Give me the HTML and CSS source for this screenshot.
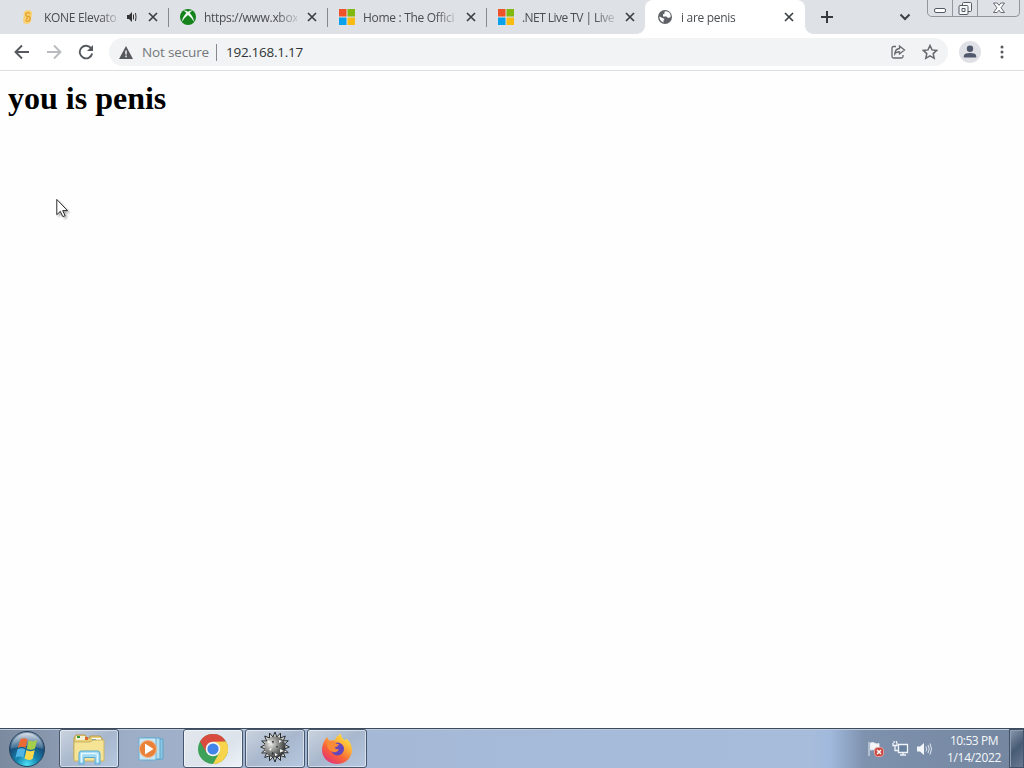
FILE: index.html
```html
<!DOCTYPE html>
<html lang="en">
<head>
    <meta charset="utf-8">
    <title>i are penis</title>
    <link rel="stylesheet" href="styles.css">
</head>
<body>
    <div class="tab-strip">
        <div class="tab first">
            <svg class="favicon" viewBox="0 0 16 16"><path d="M4 3q1-2 5-2 4 1 3 5 0 2-1 2 1 1 0 4-1 3-4 3-4 0-4-3z" fill="#f8d277"/><path d="M10 5Q8.500 3 6.500 4 5 6 7 7.500H9.500Q11 10 9 12 6.500 13 5.500 11M6 9.500h2" fill="none" stroke="#e5a12c" stroke-width="1.300"/></svg>
            <span class="tab-title short">KONE Elevato</span>
            <svg class="audio" viewBox="0 0 12 12"><path d="M1 4h2l3-3v10L3 8H1z" fill="#333"/><path d="M7.500 3.500v5M9.500 2q1 4 0 8" fill="none" stroke="#333"/></svg>
            <svg class="close" viewBox="0 0 10 10"><path d="M1 1l8 8M9 1l-8 8"/></svg>
        </div>
        <div class="tab">
            <svg class="favicon" viewBox="0 0 16 16"><circle cx="8" cy="8" r="8" fill="#14831b"/><path d="M3.400 1.500Q5.500 1 8 2.800 10.500 1 12.600 1.500 10.500 2.500 9.600 4.100 13.500 8 14.200 13Q12 9 8 6 4 9 1.800 13 2.500 8 6.400 4.100 5.500 2.500 3.400 1.500z" fill="#f2f7f3"/></svg>
            <span class="tab-title">https://www.xbox</span>
            <svg class="close" viewBox="0 0 10 10"><path d="M1 1l8 8M9 1l-8 8"/></svg>
        </div>
        <div class="tab">
            <svg class="favicon" viewBox="0 0 16 16"><path d="M0 0h7.500v7.500H0z" fill="#ef5128"/><path d="M8.500 0H16v7.500H8.500z" fill="#80b810"/><path d="M0 8.500h7.500V16H0z" fill="#08a1ec"/><path d="M8.500 8.500H16V16H8.500z" fill="#f9ba12"/></svg>
            <span class="tab-title">Home : The Offici</span>
            <svg class="close" viewBox="0 0 10 10"><path d="M1 1l8 8M9 1l-8 8"/></svg>
        </div>
        <div class="tab">
            <svg class="favicon" viewBox="0 0 16 16"><path d="M0 0h7.500v7.500H0z" fill="#ef5128"/><path d="M8.500 0H16v7.500H8.500z" fill="#80b810"/><path d="M0 8.500h7.500V16H0z" fill="#08a1ec"/><path d="M8.500 8.500H16V16H8.500z" fill="#f9ba12"/></svg>
            <span class="tab-title net">.NET Live TV | Live</span>
            <svg class="close" viewBox="0 0 10 10"><path d="M1 1l8 8M9 1l-8 8"/></svg>
        </div>
        <div class="tab active">
            <svg class="favicon" viewBox="0 0 16 16"><circle cx="8" cy="8" r="7" fill="#5f6368"/><path d="M8 2.200q-1 1-.2 2L6 5.500v2h3.500L11 9l2.500-.8Q14.200 4 10.800 2.800 9.500 2 8 2.200zM2.300 7.600L5.500 9l2 1-1 1.500v2Q2.500 12 2.300 7.600z" fill="#fff"/></svg>
            <span class="tab-title">i are penis</span>
            <svg class="close" viewBox="0 0 10 10"><path d="M1 1l8 8M9 1l-8 8"/></svg>
        </div>
        <svg class="new-tab" viewBox="0 0 14 14"><path d="M7 1v12M1 7h12"/></svg>
        <svg class="tab-search" viewBox="0 0 12 8"><path d="M1.500 1.500L6 6l4.500-4.500"/></svg>
        <div class="caption">
            <div class="cap-btn min"><svg width="14" height="6" viewBox="0 0 14 6"><rect x="1.500" y=".5" width="11" height="4" rx="1.500" fill="#fff" stroke="#555b66"/></svg></div>
            <div class="cap-btn restore"><svg width="14" height="14" viewBox="0 0 14 14" fill="#f6f7f9" stroke="#555b66"><rect x="4.500" y=".5" width="9" height="9" rx="1"/><rect x="1" y="3.500" width="9" height="9" rx="1"/><path d="M4 6.500h3v3H4z"/></svg></div>
            <div class="cap-btn x"><svg width="14" height="12" viewBox="0 0 14 12"><path d="M1.500 1h3.700L7 3.400 8.800 1h3.700L9 5.800l3.500 4.700H8.800L7 8.200l-1.800 2.300H1.500L5 5.800z" fill="#fff" stroke="#666b75"/></svg></div>
        </div>
    </div>

    <div class="toolbar">
        <svg class="nav" viewBox="0 0 16 16"><path d="M15 8H2M8 1.500L1.500 8 8 14.500"/></svg>
        <svg class="nav disabled" viewBox="0 0 16 16"><path d="M1 8h13M8 1.500L14.500 8 8 14.500"/></svg>
        <svg class="nav" viewBox="0 0 16 16"><path d="M13.300 4.500A6.300 6.300 0 1 0 14.200 9.500"/><path d="M15 1v6H9z" fill="#55595e" stroke="none"/></svg>
        <div class="omnibox">
            <svg class="warn" viewBox="0 0 14 13"><path d="M7 0l7 13H0z" fill="#55595e"/><path d="M7 4.500v4M7 9.500v1.700" stroke="#f1f3f4" stroke-width="1.500"/></svg>
            <span class="insecure">Not secure</span>
            <span class="url">192.168.1.17</span>
            <svg class="share" viewBox="0 0 16 16"><path d="M6 2.500H3.500q-1.500 0-1.500 1.500v8.500Q2 14 3.500 14h8q1.500 0 1.500-1.500V11"/><path d="M9.500 2l5 4-5 4V7.800Q6.500 7.500 4.800 10 5 5 9.500 4.500z"/></svg>
            <svg class="star" viewBox="0 0 16 16"><path d="M8 1.500l2 4.400 4.700.5-3.500 3.200 1 4.700L8 11.900l-4.200 2.400 1-4.700L1.300 6.400 6 5.900z"/></svg>
        </div>
        <svg class="profile" viewBox="0 0 22 22"><circle cx="11" cy="11" r="11" fill="#dfe1e7"/><circle cx="11" cy="7.700" r="3.200" fill="#50586b"/><path d="M4.800 16.500v-1.300q0-3.200 6.200-3.200t6.200 3.200v1.300z" fill="#50586b"/></svg>
        <svg class="menu" viewBox="0 0 4 14"><circle cx="2" cy="2" r="1.500"/><circle cx="2" cy="7" r="1.500"/><circle cx="2" cy="12" r="1.500"/></svg>
    </div>

    <div class="page">
        <h1>you is penis</h1>
        <svg class="cursor" viewBox="0 0 16 22"><path d="M1.500 1.500v16l3.700-3.500 2.600 5.500 2.400-1-2.500-5.300h5z" fill="#fff" stroke="#222"/></svg>
    </div>

    <div class="taskbar">
        <svg class="start" viewBox="0 0 38 38">
            <defs>
                <radialGradient id="orb" cx=".5" cy=".95" r=".9"><stop offset="0" stop-color="#4ce2f4"/><stop offset=".35" stop-color="#1685b0"/><stop offset=".7" stop-color="#174c78"/><stop offset="1" stop-color="#8298b0"/></radialGradient>
                <linearGradient id="gloss" x2="0" y2="1"><stop stop-color="#e5eaf0" stop-opacity=".85"/><stop offset="1" stop-color="#7599b8" stop-opacity=".4"/></linearGradient>
            </defs>
            <circle cx="19" cy="19" r="17.500" fill="url(#orb)" stroke="#25435d"/>
            <path d="M3 19a16 16 0 0 1 32 0Q19 13 3 19z" fill="url(#gloss)"/>
            <path d="M12.300 9.500q4-2.700 7.200 0L17.500 18q-4-2.500-7.800.2z" fill="#ea6a35"/>
            <path d="M20.700 10.200q4 2.400 8.300-.4L27 18.500q-4 2.600-8.200.2z" fill="#a4cf4b"/>
            <path d="M9.400 19.500q4-2.600 7.900-.1l-2 8.300q-4-2.500-7.800 0z" fill="#50b5e6"/>
            <path d="M18.500 20.100q4 2.500 8.200-.1l-2 8.700q-4 2.500-8.200-.2z" fill="#fbd94d"/>
        </svg>
        <div class="task open">
            <svg width="34" height="32" viewBox="0 0 34 32">
                <path d="M2 5l2-3h9l2 3h3V3h10l3 4v19H2z" fill="#e9cf74" stroke="#b8994c"/>
                <path d="M4 3h9v4H4z" fill="#f3f0d5"/><path d="M5 3h3v2H5z" fill="#35963b"/><path d="M13 4h3v3h-3z" fill="#d96531"/><path d="M20 5h9v4h-9z" fill="#fff"/><path d="M20 6h4v2h-4z" fill="#568fcf"/>
                <path d="M2 9h16l3-2h11v21H2z" fill="#f5e396" stroke="#ccb564"/>
                <path d="M7 31V21q0-3 2-3h17q2 0 2 3v10h-5v-6.500H12V31z" fill="#9fd9f2" stroke="#57a9d3"/>
                <path d="M9 20.500h16M9.500 21v8M25.500 21v8" stroke="#e4f8fe" stroke-width="1.500"/>
            </svg>
        </div>
        <div class="task plain">
            <svg width="28" height="28" viewBox="0 0 28 28">
                <path d="M8 3l18 1v20l-18 1z" fill="#8dc6e4" stroke="#5da4c9"/><path d="M5 3l18 0v21H5z" fill="#b5dff0" stroke="#5fa7cb"/><path d="M2 3h17v22H2z" fill="#c9e6f4" stroke="#6cafd3"/>
                <circle cx="11" cy="14" r="8.500" fill="#e98138" stroke="#f3b183"/><path d="M8 8.500l8.500 5.500L8 19.500z" fill="#fff"/>
            </svg>
        </div>
        <div class="task open current">
            <svg width="30" height="30" viewBox="0 0 30 30">
                <circle cx="15" cy="15" r="15" fill="#3da15a"/>
                <path d="M2 7.500A15 15 0 0 1 28 7.500L15 8.500 8.500 18.500z" fill="#d94b3e"/>
                <path d="M28 7.500A15 15 0 0 1 15 30l6.500-11.500L15 7.700z" fill="#f8d44c"/>
                <circle cx="15" cy="15" r="7.300" fill="#f5f5f3"/><circle cx="15" cy="15" r="5.600" fill="#4285ea"/>
            </svg>
        </div>
        <div class="task open mine">
            <svg width="32" height="32" viewBox="0 0 32 32">
                <defs><radialGradient id="metal" cx=".3" cy=".35" r=".75"><stop stop-color="#efefed"/><stop offset=".4" stop-color="#999a98"/><stop offset="1" stop-color="#2b2e30"/></radialGradient></defs>
                <path d="M16 1l1.800 5 3.700-4v5l4.800-2-2 4.800 5 0-4 3.500 5 2.700-5 2 4 3.700-5 .1 2 4.500-4.800-1.700v5l-3.700-3.800L16 31l-2-5-3.500 3.800v-5l-4.800 1.700 2-4.500-5-.1 4-3.700-5-2.200 5-2.500-4-3.500h5l-2-5 4.800 2V2l3.500 4z" fill="#d7d8d7" stroke="#292c2e"/>
                <circle cx="16" cy="16" r="10.500" fill="url(#metal)"/>
                <path d="M10 9l2 3-4-.5zM20 9l0 3 3-2zM10 18l3-1-1.500 3zM21 18l4 2-4 1.500zM16 22l3 2-3 1z" fill="#f4f4f2"/><path d="M13 10l2 0-1 3zM17 15l2 0-1 2zM13 21l2 1-2 2z" fill="#303335"/>
            </svg>
        </div>
        <div class="task open">
            <svg width="32" height="32" viewBox="0 0 32 32">
                <defs><linearGradient id="fox" x1=".9" y1="0" x2=".2" y2="1"><stop stop-color="#fff04a"/><stop offset=".35" stop-color="#ffb036"/><stop offset=".65" stop-color="#fa6238"/><stop offset="1" stop-color="#e22f7c"/></linearGradient></defs>
                <path d="M6 4q1 3 3 4 3-1 5-1 2-5 6-6 0 4 4 6l2-1q5 5 5 11A15 14 0 0 1 1 17Q1 10 6 4z" fill="url(#fox)"/>
                <circle cx="16.500" cy="16" r="6.500" fill="#6546bd"/>
                <path d="M6 5q1 3 3 3 3-1 5 1 0 2 4 2-1 3-4.500 3.500 1 2.500 4.500 1.500-2 4-6 3-6-2-6-8z" fill="#f98b38"/>
            </svg>
        </div>
        <div class="tray">
            <svg width="18" height="18" viewBox="0 0 18 18"><path d="M2 2v14M3.500 3q3-1 4.500.5 2 1 4 0v7q-2 1-4 0-1.500-1.500-4.500-.5z" fill="#f5f6f7" stroke="#e8edf3"/><rect x="7.500" y="7.500" width="9" height="9" rx="3" fill="#c94642" stroke="#e6a29e"/><path d="M10 10l4 4m0-4l-4 4" stroke="#fff" stroke-width="1.500"/></svg>
            <svg width="17" height="18" viewBox="0 0 17 18"><path d="M6.500 4.500h9v8h-9zM8 15h6M11 13v2" fill="#69819f" stroke="#f0f4f9" stroke-width="1.300"/><path d="M1 3v2.500h4V3M2 1v2M4.500 1v2M3 5.500v5h3" fill="none" stroke="#f0f4f9" stroke-width="1.300"/></svg>
            <svg width="17" height="16" viewBox="0 0 17 16"><path d="M1 5.500h3L8 2v12l-4-3.500H1z" fill="#f2f5f9"/><path d="M10 5.500q1.500 2.500 0 5M12 4q2.500 4 0 8M14 2.500q3 5.500 0 11" fill="none" stroke="#e9f0f8" stroke-width=".9"/></svg>
            <div class="clock"><span>10:53 PM</span><span class="date">1/14/2022</span></div>
        </div>
        <div class="show-desktop"></div>
    </div>
</body>
</html>
```
FILE: styles.css
```css
* {
    box-sizing: border-box;
}
body {
    margin: 0;
    height: 768px;
    overflow: hidden;
    display: flex;
    flex-direction: column;
    background: #fefefe;
    font-family: "Open Sans", "Noto Sans", sans-serif;
    color: #4a4d51;
}
svg {
    display: block;
    flex: none;
}

/* tabs */
.tab-strip {
    position: relative;
    display: flex;
    align-items: center;
    height: 34px;
    flex: none;
    padding-left: 9px;
    background: #dee1e6;
}
.tab {
    position: relative;
    display: flex;
    align-items: center;
    width: 159px;
    height: 34px;
    padding-left: 12px;
    font-size: 12px;
    letter-spacing: -0.3px;
}
.tab.first {
    padding-left: 11px;
}
.tab:not(.first):not(.active)::before {
    content: "";
    position: absolute;
    left: 0;
    top: 8px;
    width: 1px;
    height: 19px;
    background: #85898e;
}
.tab.active {
    width: 160px;
    background: #fff;
    border-radius: 8px 8px 0 0;
}
.tab.active::before,
.tab.active::after {
    content: "";
    position: absolute;
    bottom: 0;
    width: 8px;
    height: 8px;
}
.tab.active::before {
    left: -8px;
    background: radial-gradient(circle at 0 0, transparent 7.5px, #fff 8px);
}
.tab.active::after {
    right: -8px;
    background: radial-gradient(circle at 100% 0, transparent 7.5px, #fff 8px);
}
.favicon {
    width: 16px;
    height: 16px;
    margin-right: 8px;
}
.tab-title {
    width: 93px;
    white-space: nowrap;
    -webkit-mask-image: linear-gradient(90deg, #000 78%, rgba(0, 0, 0, 0.2));
    mask-image: linear-gradient(90deg, #000 78%, rgba(0, 0, 0, 0.2));
}
.tab-title.short {
    width: 73px;
}
.tab-title.net {
    letter-spacing: -0.55px;
}
.audio {
    width: 12px;
    height: 12px;
    margin: 0 0 0 9px;
}
.close {
    width: 10px;
    height: 10px;
    margin-left: 10px;
    fill: none;
    stroke: #3c4043;
    stroke-width: 1.7;
}
.new-tab {
    width: 14px;
    height: 14px;
    margin-left: 15px;
    stroke: #36393d;
    stroke-width: 2;
}
.tab-search {
    width: 12px;
    height: 8px;
    margin-left: 65px;
    fill: none;
    stroke: #3c4043;
    stroke-width: 2;
}
.caption {
    display: flex;
    align-self: flex-start;
    width: 93px;
    height: 17px;
    margin-left: 16px;
    border: 1px solid #92969d;
    border-top: 0;
    border-radius: 0 0 5px 5px;
}
.cap-btn {
    display: flex;
    align-items: center;
    justify-content: center;
    width: 25px;
    border-right: 1px solid #92969d;
}
.cap-btn.min {
    padding-top: 5px;
}
.cap-btn.restore {
    padding-top: 2px;
}
.cap-btn.x {
    width: 41px;
    border: 0;
}

/* address bar */
.toolbar {
    display: flex;
    align-items: center;
    height: 37px;
    flex: none;
    padding-left: 14px;
    background: #fff;
    border-bottom: 1px solid #dcdddf;
}
.nav {
    width: 16px;
    height: 16px;
    margin-right: 16px;
    fill: none;
    stroke: #55595e;
    stroke-width: 1.9;
}
.nav.disabled {
    stroke: #b9bbbe;
}
.omnibox {
    display: flex;
    align-items: center;
    width: 839px;
    height: 28px;
    margin-left: -1px;
    padding: 0 10px;
    background: #f1f3f4;
    border-radius: 14px;
    font-size: 13.5px;
}
.warn {
    width: 14px;
    height: 13px;
}
.insecure {
    width: 75px;
    margin-left: 9px;
    border-right: 1px solid #85898d;
    color: #74777b;
    line-height: 17px;
    white-space: nowrap;
    letter-spacing: -0.15px;
}
.url {
    margin-left: 9px;
    margin-right: auto;
    color: #303336;
    letter-spacing: -0.27px;
}
.share,
.star {
    width: 16px;
    height: 16px;
    fill: none;
    stroke: #666a6f;
    stroke-width: 1.3;
}
.star {
    margin-left: 16px;
    stroke-width: 1.5;
}
.profile {
    width: 22px;
    height: 22px;
    margin-left: 11px;
}
.menu {
    width: 4px;
    height: 14px;
    margin-left: 19px;
    fill: #55595e;
}

/* page */
.page {
    position: relative;
    flex: 1;
    padding: 9px 8px;
}
h1 {
    margin: 0;
    font-family: "Liberation Serif", serif;
    font-size: 32px;
    line-height: 36px;
    color: #000;
}
.cursor {
    position: absolute;
    left: 55px;
    top: 127px;
    width: 16px;
    height: 21px;
    filter: drop-shadow(2px 2px 1px rgba(0, 0, 0, 0.3));
}

/* taskbar */
.taskbar {
    display: flex;
    align-items: center;
    height: 40px;
    flex: none;
    padding-left: 8px;
    border-top: 1px solid #3d4a5b;
    box-shadow: inset 0 1px #bdcbdd;
    background: linear-gradient(90deg, #7c8a9f 0, #8a99af 55px, #9dadc6 125px, #a5b9d7 380px, #a7bcdb 810px, #a0b9dc 830px, #7e91ad 865px, #74869f 100%);
}
.start {
    width: 38px;
    height: 38px;
    margin-right: 13px;
}
.task {
    display: flex;
    align-items: center;
    justify-content: center;
    width: 60px;
    height: 39px;
    margin-right: 2px;
}
.task.open {
    border: 1px solid #46566d;
    border-radius: 3px;
    box-shadow: inset 0 0 0 1px rgba(255, 255, 255, 0.5);
    background: linear-gradient(145deg, #cbd4df, #a8b7cd 50%, #b5c8df);
}
.task.plain {
    padding-right: 1px;
}
.task.current {
    background: linear-gradient(145deg, #e2e7ec, #dce3eb 60%, #edf3f7);
}
.task.mine {
    padding-bottom: 4px;
}
.tray {
    display: flex;
    align-items: center;
    gap: 7px;
    margin-left: auto;
}
.clock {
    display: flex;
    flex-direction: column;
    align-items: center;
    width: 54px;
    margin-left: 7px;
    color: #f4f7fa;
    font-size: 12px;
    line-height: 17px;
    letter-spacing: -0.45px;
    white-space: nowrap;
}
.date {
    letter-spacing: -0.3px;
}
.show-desktop {
    width: 15px;
    height: 39px;
    margin-left: 8px;
    border: 1px solid #43536a;
    box-shadow: inset 1px 1px #8e9daf;
    background: linear-gradient(135deg, #8a9aaf, #485b75 50%, #697b93);
}
```
